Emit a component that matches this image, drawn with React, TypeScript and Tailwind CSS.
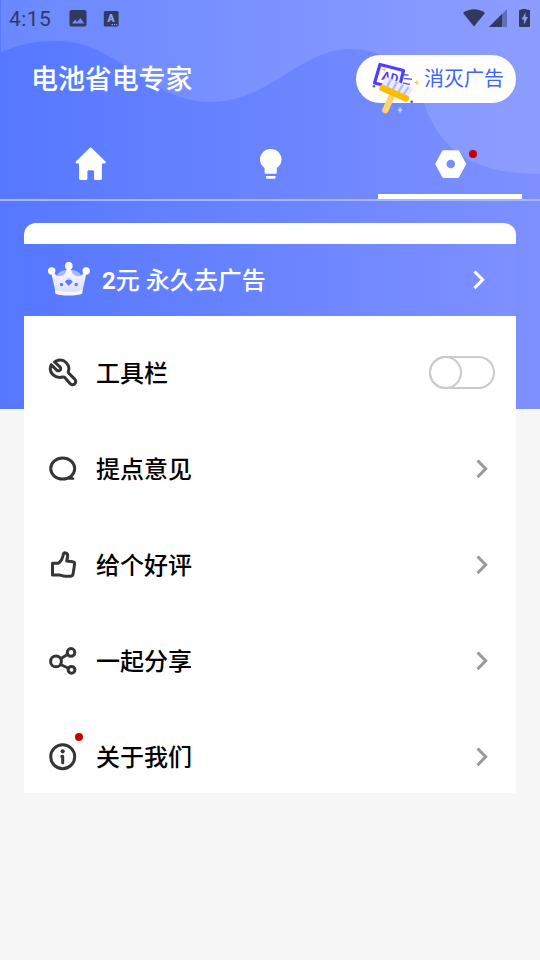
import type { ReactNode } from 'react'

const stroke = {
  fill: 'none',
  stroke: '#343537',
  strokeWidth: 3,
  strokeLinecap: 'round' as const,
  strokeLinejoin: 'round' as const,
}

function WrenchIcon() {
  return (
    <svg className="h-8 w-8" viewBox="0 0 32 32" {...stroke}>
      <path d="M9 4.200c3.300-1.700 7.500-1.300 10.300 1.500 2.400 2.400 3.100 5.800 2 8.800-.2.800 0 1.400.6 1.900l5.600 5.500c1.500 1.500 1.600 3.700.2 5-1.300 1.200-3.400 1.100-4.700-.4l-5.200-5.900c-.6-.6-1.200-.8-2-.6-3.500.9-7.300.2-9.900-2.300-2.700-2.700-3.200-6.700-1.600-10l5.400 5.400c1 1 2.400 1 3.300.1.900-.9.900-2.300-.1-3.300L7.500 5" />
    </svg>
  )
}

function ChatIcon() {
  return (
    <svg className="h-8 w-8" viewBox="0 0 32 32" {...stroke}>
      <ellipse cx="15.700" cy="15.600" rx="12" ry="10.500" />
      <path d="m24 23.500 2.600 2.400-4.600.1Z" fill="#343537" strokeWidth="1.500" />
    </svg>
  )
}

function ThumbIcon() {
  return (
    <svg className="h-8 w-8" viewBox="0 0 32 32" {...stroke}>
      <path d="M5.500 14.200h5.800c2.500-1.500 4-4.200 4.700-7.700.3-1.900 1.200-2.800 2.500-2.600 1.700.3 2.400 1.700 2.100 3.800l-.9 4.400 6 .6c1.500.2 2.100 1 1.900 2.400l-1.500 9.600c-.3 1.700-1.200 2.500-2.800 2.500h-5.200c-2.200 0-3.900-.9-5.700-1.300H5.500Z" />
    </svg>
  )
}

function ShareIcon() {
  return (
    <svg className="h-8 w-8" viewBox="0 0 32 32" {...stroke}>
      <circle cx="9" cy="16.400" r="5.400" />
      <circle cx="24" cy="7.400" r="3.800" />
      <circle cx="24.500" cy="24.800" r="3.400" />
      <path d="m14 13.500 6.500-4M13.500 19.500l7.500 3.500" />
    </svg>
  )
}

function InfoIcon() {
  return (
    <svg className="h-8 w-8" viewBox="0 0 32 32" {...stroke}>
      <circle cx="15.700" cy="15.700" r="12" />
      <circle cx="15.700" cy="10.300" r="2.100" fill="#343537" stroke="none" />
      <path d="M15.700 15.500v6.300M14.800 15.300h.9" />
    </svg>
  )
}

function HomeIcon() {
  return (
    <svg className="h-9 w-9" viewBox="0 0 36 36" fill="#fff">
      <path d="M17.600 1.900a1.600 1.600 0 0 1 2.100 0l13.500 13.400c1 1 .6 2.200-.8 2.200h-2.500v14.700c0 1.300-.5 1.800-1.700 1.800h-4.400c-1.300 0-1.700-.5-1.700-1.800v-6.400c0-1.100-.6-1.600-1.700-1.600h-3.400c-1.100 0-1.600.5-1.600 1.600v6.400c0 1.300-.5 1.800-1.700 1.800H8.800c-1.200 0-1.700-.5-1.700-1.800V17.500H4.900c-1.400 0-1.800-1.200-.8-2.200Z" />
    </svg>
  )
}

function BulbIcon() {
  return (
    <svg className="h-9 w-9" viewBox="0 0 36 36" fill="#fff">
      <path d="M18.700 3C12.700 3 8 7.700 8 13.500c0 4 2.200 7 4.600 8.500v4.300c0 1 .5 1.500 1.500 1.500h9.200c1 0 1.500-.5 1.500-1.500V22c2.500-1.500 4.800-4.500 4.800-8.500C29.600 7.700 24.800 3 18.700 3Z" />
      <path d="M14 30h9.500v1.300c0 1-.6 1.500-1.500 1.500h-6.500c-1 0-1.500-.5-1.500-1.500Z" />
    </svg>
  )
}

function NutIcon() {
  return (
    <svg className="h-9 w-9" viewBox="0 0 36 36" fill="#fff" fillRule="evenodd">
      <path d="M11.800 4.200h13.800c.7 0 1.200.3 1.600.9l6.500 11.800c.4.700.4 1.500 0 2.200L27.200 31c-.4.700-.9 1-1.600 1H11.800c-.7 0-1.200-.3-1.600-1L3.700 19.100c-.4-.7-.4-1.500 0-2.200l6.500-11.800c.4-.6.900-.9 1.600-.9Zm7 9.500a4.300 4.300 0 1 0 0 8.600 4.300 4.300 0 0 0 0-8.600Z" />
    </svg>
  )
}

function CrownIcon() {
  return (
    <svg className="h-9 w-[42px]" viewBox="0 0 42 36">
      <defs>
        <linearGradient id="crown" x1="0" y1="0" x2="0" y2="1">
          <stop offset="0" stopColor="#fff" />
          <stop offset="1" stopColor="#d9dcff" />
        </linearGradient>
      </defs>
      <path d="M9 13C13 6 29 6 33 13l-4 5H13Z" fill="#a9bbff" />
      <path
        fill="url(#crown)"
        fillRule="evenodd"
        d="M19 5h3.600c.4 5.500 3.200 9.300 7 9.300 3 0 5.200-1.600 7.200-4.300l1.700 1-4 18c-4 2.500-23.200 2.500-27.200 0l-4-18 1.700-1c2 2.700 4.200 4.300 7.200 4.300 3.800 0 6.400-3.800 6.800-9.300ZM20.800 15.800l-4 4 4 4 4-4ZM13.500 20.800a1.700 1.700 0 1 0 0 3.400 1.700 1.700 0 0 0 0-3.400Zm14.700 0a1.700 1.700 0 1 0 0 3.400 1.700 1.700 0 0 0 0-3.400Z"
      />
      <path d="M7 28.200c5 1.800 22.600 1.800 27.600 0l-.3 3.300c-4 2.700-23 2.700-27 0Z" fill="#f7f5ff" />
      <circle cx="20.800" cy="3.900" r="3.800" fill="#fff" />
      <circle cx="3.700" cy="8.900" r="3.700" fill="#fff" />
      <circle cx="38.200" cy="8.900" r="3.700" fill="#fff" />
    </svg>
  )
}

function AdBrushIcon() {
  return (
    <svg className="h-[54px] w-[50px]" viewBox="0 0 50 54">
      <path d="m34 13.500 5.500.8M35 17.500l8 .8M34 22l7 1.500" stroke="#5b60ff" strokeWidth="1.500" />
      <path d="m11 3.500 23.500 6-4.500 18.500-24.500-6Z" fill="#fff" stroke="#4f3eff" strokeWidth="3.200" strokeLinejoin="round" />
      <text x="12" y="18.500" fontSize="12.500" fontWeight="700" fill="#4f3eff" fontFamily="Roboto, sans-serif" transform="rotate(14 12 18.500)">
        AD
      </text>
      <path d="M16.500 15.500 44 27l-5.500 11.500L12 26.500Z" fill="#ebeaff" />
      <path d="m22 18-4.500 9m10.500-6.500-4.500 9m10.500-6-5 8.500m10.500-6-5.500 8.500" stroke="#a9bdff" strokeWidth="2.200" />
      <path d="m22.800 35-6.300 14" stroke="#ffd46f" strokeWidth="6.500" strokeLinecap="round" />
      <path d="m13.500 27 23.500 10.500" stroke="#ffbc05" strokeWidth="6.500" strokeLinecap="round" />
      <path d="M47.700 19.500v4.400m-2.200-2.200h4.400M15.300 6v4.600M13 8.300h4.600" stroke="#ffc477" strokeWidth="1.200" />
      <circle cx="42.700" cy="40.700" r="1.300" fill="#5543ef" />
      <circle cx="5" cy="25.300" r="1.300" fill="#6b43ef" />
      <path d="M31 46.600v4.800m-2-2.400h4" stroke="#bccbff" strokeWidth="1.800" />
    </svg>
  )
}

function Chevron({ color }: { color: string }) {
  return (
    <svg className="h-5 w-5" viewBox="0 0 20 20" fill="none" stroke={color} strokeWidth="3">
      <path d="m6.500 1.500 8.200 8.300-8.200 8.300" />
    </svg>
  )
}

function StatusBar() {
  return (
    <div className="flex h-9 items-center pt-0.5 pr-[9px] pl-[9px] text-[#31395f]">
      <span className="w-[59px] font-[Roboto,sans-serif] text-[21px] leading-6 tracking-[0.4px]">4:15</span>
      <svg className="h-5 w-5" viewBox="0 0 20 20" fill="currentColor" fillRule="evenodd">
        <path d="M3.500 1h13a2 2 0 0 1 2 2v12.500a2 2 0 0 1-2 2h-13a2 2 0 0 1-2-2V3a2 2 0 0 1 2-2ZM4 14.500h12.300l-4-5.500-3.100 4-2.200-2.500Z" />
      </svg>
      <svg className="ml-[15px] h-4 w-4" viewBox="0 0 16 16">
        <rect x=".8" y="0" width="14.800" height="15.400" rx="1.500" fill="currentColor" />
        <text x="8" y="11" textAnchor="middle" fontSize="11" fontWeight="900" fill="#8f9ff8" fontFamily="Roboto, sans-serif">
          A
        </text>
        <path d="M8.500 13.700h1.500m1 0h1m1 0h1" stroke="#8f9ff8" strokeWidth="1.300" />
      </svg>
      <svg className="ml-auto h-5 w-[69px]" viewBox="0 0 69 20" fill="currentColor">
        <path d="M12 17.500 1 4C7.500-.9 16.500-.9 23 4Z" />
        <path d="M45 0v18H27Z" opacity=".45" />
        <path d="M40 5v13H27Z" />
        <path
          fillRule="evenodd"
          d="M59.500-1h5v1.800H67q1 0 1 1V17q0 1-1 1H58q-1 0-1-1V1.800q0-1 1-1h1.500ZM63.500 3.500 59.500 10.500H62v5l4-7.500H63.500Z"
        />
      </svg>
    </div>
  )
}

type MenuRow = {
  label: string
  icon: ReactNode
  toggle?: boolean
  dot?: boolean
}

const rows: MenuRow[] = [
  { label: '工具栏', icon: <WrenchIcon />, toggle: true },
  { label: '提点意见', icon: <ChatIcon /> },
  { label: '给个好评', icon: <ThumbIcon /> },
  { label: '一起分享', icon: <ShareIcon /> },
  { label: '关于我们', icon: <InfoIcon />, dot: true },
]

const tabs = [
  { id: 'home', icon: <HomeIcon /> },
  { id: 'tips', icon: <BulbIcon /> },
  { id: 'settings', icon: <NutIcon />, active: true, dot: true },
]

export default function App() {
  return (
    <div className="relative isolate h-[960px] w-[540px] overflow-hidden bg-[#f7f7f7] bg-[linear-gradient(to_right,#5678ff,#7e90ff)] bg-[length:100%_409px] bg-no-repeat font-[Roboto,'Noto_Sans_CJK_SC',sans-serif]">
      {/* Wave behind the header */}
      <svg className="absolute top-0 left-0 -z-10" width="540" height="180" viewBox="0 0 540 180">
        <path
          d="M1 0v52C20 44 38 41 57 41c61 0 92 61 153 61 59 0 91-53 140-53 34 0 62 19 73 52 16 47 47 73 117 73V0Z"
          fill="#fff"
          fillOpacity=".12"
        />
      </svg>

      <StatusBar />

      <header className="flex h-[86px] items-center justify-between pr-6 pl-[31px]">
        <h1 className="pt-0.5 text-[27px] leading-9 font-medium tracking-[-0.1px] text-white">电池省电专家</h1>
        <button className="relative flex h-12 w-40 items-center rounded-full bg-white pl-[68px] text-xl text-[#3d64ff]">
          <span className="absolute top-[6px] left-[13px]">
            <AdBrushIcon />
          </span>
          消灭广告
        </button>
      </header>

      <nav className="grid h-[79px] grid-cols-3 border-b-2 border-[#a8b6ff]">
        {tabs.map((tab) => (
          <button key={tab.id} className="relative flex justify-center pt-6">
            {tab.icon}
            {tab.dot && <span className="absolute top-[28px] left-[109px] h-2 w-2 rounded-full bg-[#c90000]" />}
            {tab.active && <span className="absolute bottom-0 left-[18px] h-[5px] w-36 bg-white" />}
          </button>
        ))}
      </nav>

      <main className="mx-6 mt-[22px] h-[570px] overflow-hidden rounded-t-xl bg-white pt-[21px]">
        <button className="flex h-[72px] w-full items-center bg-[linear-gradient(to_right,#5678ff,#7e90ff)] pr-7 pl-6 text-2xl font-medium text-white">
          <CrownIcon />
          <span className="ml-3 pt-0.5">
            <b>2</b>元 永久去广告
          </span>
          <span className="ml-auto">
            <Chevron color="#fff" />
          </span>
        </button>

        <ul className="pt-[9px]">
          {rows.map((row) => (
            <li key={row.label} className="relative flex h-24 items-center pr-[25px] pl-[23px]">
              {row.icon}
              {row.dot && <span className="absolute top-6 left-[51px] h-2 w-2 rounded-full bg-[#c90000]" />}
              <span className="ml-[17px] pt-0.5 text-2xl font-medium text-black">{row.label}</span>
              {row.toggle ? (
                <span className="-mr-1 mb-0.5 ml-auto flex h-[33px] w-[66px] rounded-full border-2 border-[#cacaca]">
                  <span className="-m-0.5 h-[33px] w-[33px] rounded-full border-2 border-[#cacaca]" />
                </span>
              ) : (
                <span className="ml-auto">
                  <Chevron color="#999" />
                </span>
              )}
            </li>
          ))}
        </ul>
      </main>
    </div>
  )
}
